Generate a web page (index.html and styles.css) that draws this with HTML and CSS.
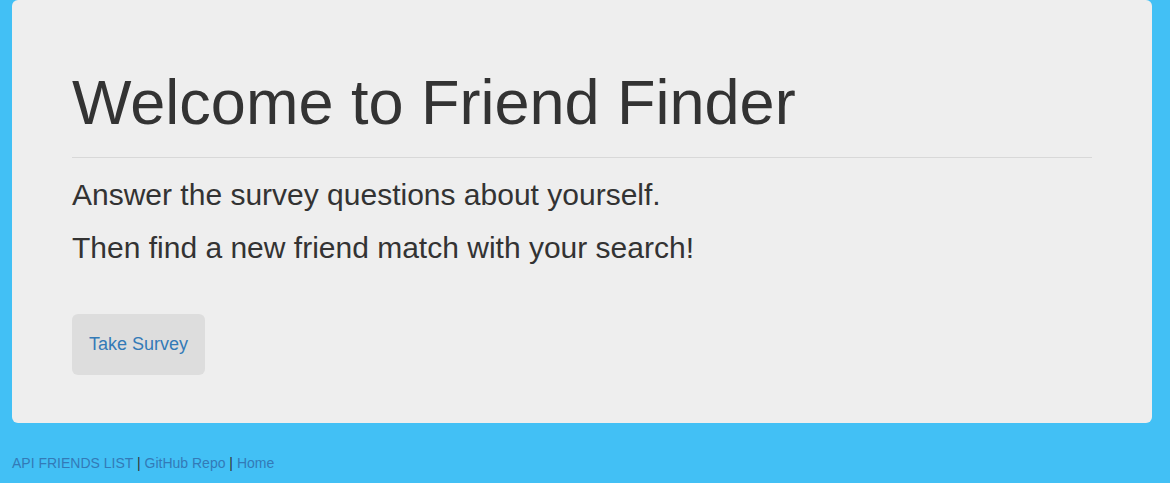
FILE: index.html
```html
<!DOCTYPE html>
<html>
<head>
<meta charset="utf-8">
<link rel="stylesheet" href="styles.css">
</head>
<body>
<div class="page">
  <div class="jumbotron">
    <h1 class="title">Welcome to Friend Finder</h1>
    <hr class="rule">
    <p class="lead">Answer the survey questions about yourself.</p>
    <p class="lead">Then find a new friend match with your search!</p>
    <a class="btn" href="#">Take Survey</a>
  </div>
  <div class="footer">
    <a href="#">API FRIENDS LIST</a> | <a href="#">GitHub Repo</a> | <a href="#">Home</a>
  </div>
</div>
</body>
</html>
```
FILE: styles.css
```css
html, body {
  margin: 0;
  padding: 0;
  background: #ffffff;
}
body {
  font-family: "Liberation Sans", Arial, sans-serif;
  font-size: 14px;
  line-height: 20px;
  color: #333;
}
.page {
  background: #42c0f5;
  padding: 0 18px 10px 12px;
}
.jumbotron {
  background: #eeeeee;
  border-radius: 6px;
  padding: 48px 60px;
  margin-bottom: 30px;
}
.title {
  margin: 20px 0 10px;
  font-size: 63px;
  font-weight: 500;
  line-height: 1.1;
  color: #333;
}
.rule {
  margin: 20px 0;
  border: 0;
  border-top: 1px solid #d8d8d8;
}
.lead {
  font-size: 30px;
  line-height: 33px;
  margin: 0 0 20px;
}
.lead + .lead {
  margin-bottom: 50px;
}
.btn {
  display: inline-block;
  background: #dddddd;
  color: #337ab7;
  font-size: 18px;
  line-height: 24px;
  padding: 18px 17px 19px;
  border-radius: 6px;
  text-decoration: none;
}
.footer a {
  color: #337ab7;
  text-decoration: none;
}
```
